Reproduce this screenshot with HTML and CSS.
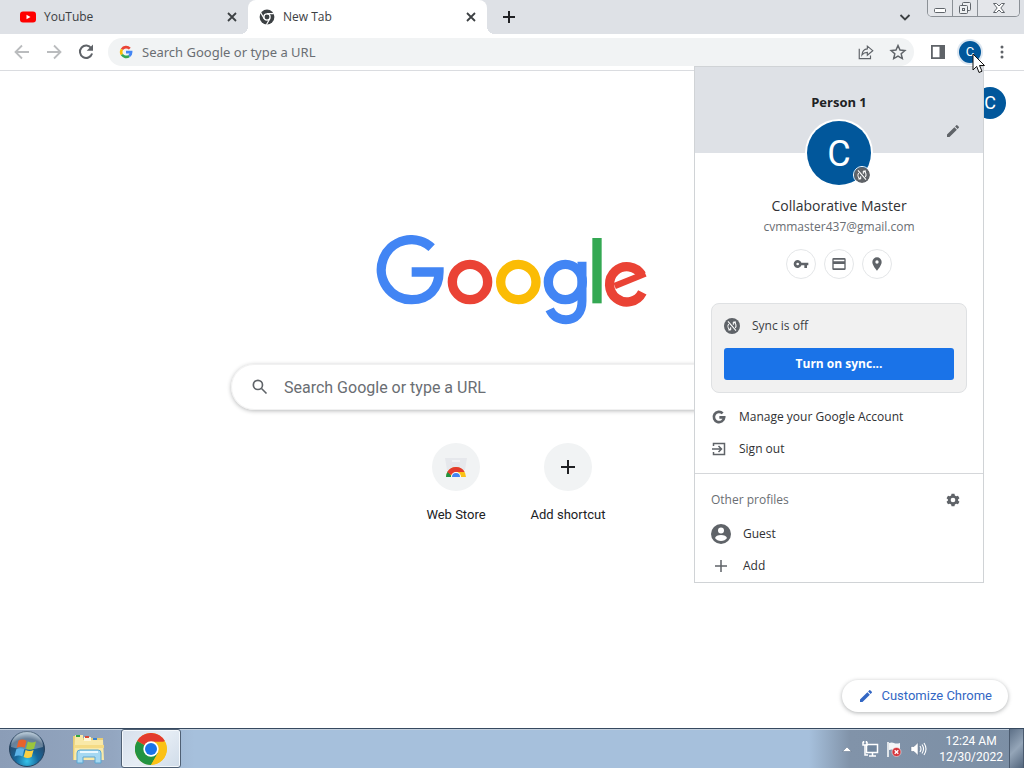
FILE: index.html
```html
<!DOCTYPE html>
<html lang="en">
<head>
<meta charset="utf-8">
<title>New Tab</title>
<link rel="stylesheet" href="styles.css">
</head>
<body>
<svg class="defs" aria-hidden="true">
  <symbol id="close" viewBox="0 0 16 16"><path d="M4 4l8 8M12 4l-8 8" fill="none" stroke="currentColor" stroke-width="1.8"/></symbol>
  <symbol id="plus" viewBox="0 0 16 16"><path d="M8 2v12M2 8h12" fill="none" stroke="currentColor" stroke-width="2"/></symbol>
  <symbol id="pencil" viewBox="0 0 24 24"><path fill="currentColor" d="M3 17.25V21h3.75L17.81 9.94l-3.75-3.75L3 17.25zM20.71 7.04a1 1 0 0 0 0-1.41l-2.34-2.34a1 1 0 0 0-1.41 0l-1.83 1.83 3.75 3.75 1.83-1.83z"/></symbol>
  <symbol id="syncoff" viewBox="0 0 24 24"><circle cx="12" cy="12" r="12" fill="#5f6368"/><g fill="none" stroke="#fff" stroke-width="1.6"><path d="M6 5l12 14"/><path d="M10 18H6.500M9 18c-3-2-4-6-2-9M14 6h4M15 6c3 2 4 6 2 9"/><path d="M10 14v4M14 10V6"/></g></symbol>
  <symbol id="chrome" viewBox="0 0 48 48">
    <circle cx="24" cy="24" r="24" fill="#fbc116"/>
    <path d="M24 24L3.200 12A24 24 0 0 1 44.800 12Z" fill="#e33b2e"/>
    <path d="M3.200 12A24 24 0 0 0 24 48L34.400 30 24 24Z" fill="#229342"/>
    <path d="M24 13h20.800A24 24 0 0 1 24 48l10.400-18Z" fill="#fbc116"/>
    <circle cx="24" cy="24" r="11.500" fill="#fff"/><circle cx="24" cy="24" r="9" fill="#1a73e8"/>
  </symbol>
</svg>

<header class="browser">
  <div class="tabstrip">
    <div class="tab">
      <svg class="i16" viewBox="0 0 16 16"><rect y="2.500" width="16" height="11" rx="3" fill="#f00"/><path d="M6.500 5.700v4.600l4-2.300z" fill="#fff"/></svg>
      <span class="tab-title">YouTube</span>
      <button class="plain" aria-label="Close YouTube"><svg class="i16"><use href="#close"/></svg></button>
    </div>
    <div class="tab active">
      <svg class="i16" viewBox="0 0 16 16"><circle cx="8" cy="8" r="7.400" fill="#3c4043"/><circle cx="8" cy="8" r="3.100" fill="#3c4043" stroke="#fff" stroke-width="1.300"/><path d="M8 4.700h6.800M5.200 9.700L1.800 3.800M10.800 9.700l-3.400 6" stroke="#fff" stroke-width="1.200"/></svg>
      <span class="tab-title">New Tab</span>
      <button class="plain" aria-label="Close New Tab"><svg class="i16"><use href="#close"/></svg></button>
    </div>
    <button class="plain newtab" aria-label="Open new tab"><svg class="i16"><use href="#plus"/></svg></button>
    <button class="plain tabsearch" aria-label="Search tabs"><svg class="i16" viewBox="0 0 16 16"><path d="M3.500 6L8 10.500 12.500 6" fill="none" stroke="currentColor" stroke-width="1.800"/></svg></button>
    <div class="wincontrols">
      <button aria-label="Minimize"><svg viewBox="0 0 16 16"><rect x="2.500" y="8.500" width="11" height="4" rx="1" fill="#fff" stroke="#60656b"/></svg></button>
      <button aria-label="Restore"><svg viewBox="0 0 16 16"><g fill="#eef0f2" stroke="#60656b"><rect x="5.500" y="2.500" width="8" height="8" rx="1"/><rect x="2.500" y="5.500" width="8" height="8" rx="1"/><rect x="5.500" y="8.500" width="2" height="2"/></g></svg></button>
      <button class="wide" aria-label="Close"><svg viewBox="0 0 16 16"><path d="M2.500 3.500h3L8 6l2.500-2.500h3L9.800 8l3.700 4.500h-3L8 10l-2.500 2.500h-3L6.200 8z" fill="#fff" stroke="#60656b"/></svg></button>
    </div>
  </div>
  <div class="toolbar">
    <button class="plain tool dim" aria-label="Back"><svg class="i20" viewBox="0 0 20 20"><path d="M17 10H4M10 3.500L3.500 10l6.500 6.500" fill="none" stroke="currentColor" stroke-width="1.800"/></svg></button>
    <button class="plain tool dim" aria-label="Forward"><svg class="i20" viewBox="0 0 20 20"><path d="M3 10h13M10 3.500l6.500 6.500-6.500 6.500" fill="none" stroke="currentColor" stroke-width="1.800"/></svg></button>
    <button class="plain tool" aria-label="Reload"><svg class="i20" viewBox="0 0 20 20"><path d="M15.300 6.200A6.200 6.200 0 1 0 16.100 11.500" fill="none" stroke="currentColor" stroke-width="2"/><path d="M17 2.500v6.300h-6.300z" fill="currentColor"/></svg></button>
    <div class="omnibox">
      <svg class="glogo" viewBox="0 0 48 48" aria-hidden="true"><g fill="none" stroke-width="9"><path d="M10 15A17.500 17.500 0 0 1 37 12.500" stroke="#ea4335"/><path d="M10 33A17.500 17.500 0 0 1 10 15" stroke="#fbbc05"/><path d="M10 33A17.500 17.500 0 0 0 35 37.500" stroke="#34a853"/><path d="M35 37.500Q41.500 32 41.500 24.500H24" stroke="#4285f4"/></g></svg>
      <input type="text" aria-label="Address and search bar" placeholder="Search Google or type a URL">
      <button class="plain tool" aria-label="Share"><svg class="i18" viewBox="0 0 20 20"><g fill="none" stroke="currentColor" stroke-width="1.300"><path d="M2.500 6.500v10.800H15v-3.500"/><path d="M11.500 3.500l6 5-6 5v-3c-3 0-4.500.8-6 2.800.3-4 2.500-6.500 6-6.800z"/></g></svg></button>
      <button class="plain tool" aria-label="Bookmark this tab"><svg class="i20" viewBox="0 0 20 20"><path d="M10 3.500l2 4.500 4.900.500-3.700 3.300 1.100 4.800L10 14.100l-4.300 2.500 1.100-4.800L3.100 8.500 8 8z" fill="none" stroke="currentColor" stroke-width="1.500"/></svg></button>
    </div>
    <button class="plain tool" aria-label="Side panel"><svg class="i20" viewBox="0 0 20 20"><path d="M3 3h14v14H3zM4.800 4.800v10.400h6.700V4.800z" fill="currentColor" fill-rule="evenodd"/></svg></button>
    <button class="plain tool" aria-label="Profile"><span class="avatar tiny">C</span></button>
    <button class="plain tool" aria-label="Menu"><svg class="i20" viewBox="0 0 20 20"><g fill="currentColor"><circle cx="10" cy="5" r="1.500"/><circle cx="10" cy="10" r="1.500"/><circle cx="10" cy="15" r="1.500"/></g></svg></button>
  </div>
</header>

<main class="page">
  <button class="plain account" aria-label="Google Account"><span class="avatar small">C</span></button>
  <svg class="wordmark" viewBox="48 30 812 270" role="img" aria-label="Google">
    <g fill="none" stroke-width="28">
      <path d="M213 68A90 90 0 1 0 154 224C204 224 235 190 235 141H153" stroke="#4285f4"/>
      <circle cx="328" cy="171" r="53" stroke="#ea4335"/>
      <circle cx="473" cy="171" r="53" stroke="#fbbc05"/>
      <ellipse cx="614" cy="171" rx="51" ry="53" stroke="#4285f4"/>
      <path d="M664 110V228C664 264 645 284 616 284C593 284 576 272 567 253" stroke="#4285f4" stroke-width="27"/>
      <path d="M709 39V235" stroke="#34a853"/>
      <path d="M843 150A52 53 0 1 0 845 202" stroke="#ea4335"/>
      <path d="M762 183L854 146" stroke="#ea4335" stroke-width="19"/>
    </g>
  </svg>
  <div class="searchbox">
    <svg class="i20" viewBox="0 0 24 24"><g fill="none" stroke="currentColor" stroke-width="2"><circle cx="9.500" cy="9.500" r="5.500"/><path d="M13.800 13.800l6 6"/></g></svg>
    <input type="text" aria-label="Search" placeholder="Search Google or type a URL">
  </div>
  <nav class="shortcuts">
    <a href="#" class="shortcut"><span class="disc"><svg class="i24" viewBox="0 0 24 24"><path d="M1 3h22l-2 12H3z" fill="#e6e8ec"/><path d="M8 6h8" stroke="#f1f3f4" stroke-width="2"/><path d="M2 22a10 10 0 0 1 20 0z" fill="#fbc116"/><path d="M2 22a10 10 0 0 1 2-6l4 6z" fill="#229342"/><path d="M3.300 17A10 10 0 0 1 20.700 17H12l-5 3z" fill="#e33b2e"/><path d="M7 22a5 5 0 0 1 10 0z" fill="#fff"/><path d="M8 22a4 4 0 0 1 8 0z" fill="#4285f4"/></svg></span>Web Store</a>
    <a href="#" class="shortcut"><span class="disc"><svg class="i20" viewBox="0 0 20 20"><path d="M10 3v14M3 10h14" stroke="#202124" stroke-width="2"/></svg></span>Add shortcut</a>
  </nav>
  <button class="customize"><svg class="i16"><use href="#pencil"/></svg>Customize Chrome</button>
</main>

<footer class="taskbar">
  <button class="plain start" aria-label="Start"><svg viewBox="0 0 38 38">
    <defs><radialGradient id="orb" cx=".5" cy=".85" r=".8"><stop offset="0" stop-color="#35c3ea"/><stop offset=".4" stop-color="#17689c"/><stop offset=".8" stop-color="#28496b"/><stop offset="1" stop-color="#8fa9bf"/></radialGradient></defs>
    <circle cx="19" cy="19" r="17.500" fill="url(#orb)" stroke="#26425e"/><path d="M3 17A16 16 0 0 1 35 17Q19 22 3 17z" fill="#fff" opacity=".3"/>
    <path d="M10.500 10.500q4-2 8 .3l-1.800 7q-4-2-8 0z" fill="#e8622c"/><path d="M19.800 11.500q4 2 8.200 0l-2 7.200q-4 2-8 0z" fill="#9bc53c"/><path d="M8.300 19.200q4-2 8 0l-1.900 7.200q-4-2-8 .2z" fill="#5cb3e8"/><path d="M17.600 20q4 2 8 0l-2 7q-4 2-8 0z" fill="#fbd043"/></svg></button>
  <button class="plain explorer" aria-label="Windows Explorer"><svg viewBox="0 0 36 32"><path d="M2 3h8l2 2h20v22H2z" fill="#e9cd74"/><path d="M4 2h8v5h20l1 20H3z" fill="#f9e9a8"/><path d="M13 4h7v4h-7z" fill="#fff7d8"/><path d="M5 2h4v2H5z" fill="#31a643"/><path d="M14 3h4v2h-4z" fill="#d94b39"/><path d="M22 5h4v2h-4z" fill="#3c83cf"/><path d="M3 12h30v3H3z" fill="#f4db85"/><path d="M6 30V20q0-3 3-3h18q3 0 3 3v10h-6v-6H12v6z" fill="#a5d8f2" stroke="#5aa7d2"/><path d="M9 19h18" stroke="#e9f8ff" stroke-width="2"/></svg></button>
  <button class="plain running" aria-label="Google Chrome"><svg class="i32"><use href="#chrome"/></svg></button>
  <div class="tray">
    <svg class="i16" viewBox="0 0 16 16"><path d="M3.500 10.500h9L8 6z" fill="#fff" stroke="#5c6f86" stroke-width=".5"/></svg>
    <svg class="i18" viewBox="0 0 18 18"><rect x="5.500" y="4.500" width="11" height="8" fill="#70859d" stroke="#fff" stroke-width="1.500"/><path d="M8 16h7M11.500 13v3M2 2v3h4V2M4 5v10h3M2.500 1v2M5.500 1v2" fill="none" stroke="#fff" stroke-width="1.500"/></svg>
    <svg class="i18" viewBox="0 0 18 18"><path d="M3 2v15" stroke="#fff" stroke-width="1.500"/><path d="M4 3q3-1 5 0t6 0v7q-4 1-6 0t-5 0z" fill="#f4f6f8"/><circle cx="11.500" cy="12" r="4.500" fill="#d5343a" stroke="#fff" stroke-width=".5"/><path d="M9.700 10.200l3.600 3.600M13.300 10.200l-3.600 3.600" stroke="#fff" stroke-width="1.400"/></svg>
    <svg class="i18" viewBox="0 0 18 18"><path d="M2 6.500h3l4-4v13l-4-4H2z" fill="#fff" stroke="#5c6f86" stroke-width=".5"/><path d="M11 6q2 3 0 6M13 4.500q3 4.500 0 9M15 3q4 6 0 12" fill="none" stroke="#fff" stroke-width="1.100"/></svg>
    <div class="clock"><span>12:24 AM</span><span>12/30/2022</span></div>
    <button class="showdesktop" aria-label="Show desktop"></button>
  </div>
</footer>

<section class="profile" aria-label="Profile menu">
  <div class="cover">
    <h2>Person 1</h2>
    <button class="plain edit" aria-label="Edit profile"><svg class="i16"><use href="#pencil"/></svg></button>
    <div class="portrait"><span class="avatar large">C</span><svg class="badge"><use href="#syncoff"/></svg></div>
  </div>
  <div class="identity">
    <div class="name">Collaborative Master</div>
    <div class="mail">cvmmaster437@gmail.com</div>
    <div class="quick">
      <button aria-label="Passwords"><svg class="i16" viewBox="0 0 24 24"><path fill="currentColor" d="M12.650 10A6 6 0 1 0 12.650 14H17v4h4v-4h2v-4zM7 14a2 2 0 1 1 0-4 2 2 0 0 1 0 4z"/></svg></button>
      <button aria-label="Payment methods"><svg class="i16" viewBox="0 0 24 24"><path fill="currentColor" fill-rule="evenodd" d="M4 3h16a2 2 0 0 1 2 2v14a2 2 0 0 1-2 2H4a2 2 0 0 1-2-2V5a2 2 0 0 1 2-2zM4 5.500v2.500h16V5.500zM4 12v6.500h16V12z"/></svg></button>
      <button aria-label="Addresses"><svg class="i16" viewBox="0 0 24 24"><path fill="currentColor" fill-rule="evenodd" d="M12 2a7 7 0 0 0-7 7c0 5.300 7 13 7 13s7-7.700 7-13a7 7 0 0 0-7-7zm0 4.500a2.500 2.500 0 1 1 0 5 2.500 2.500 0 0 1 0-5z"/></svg></button>
    </div>
  </div>
  <div class="sync">
    <div class="syncstate"><svg class="i16"><use href="#syncoff"/></svg>Sync is off</div>
    <button class="primary">Turn on sync...</button>
  </div>
  <div class="actions">
    <button class="plain row"><svg class="i16" viewBox="0 0 48 48"><path d="M35 13A15.500 15.500 0 1 0 39.500 25H25" fill="none" stroke="currentColor" stroke-width="8"/></svg>Manage your Google Account</button>
    <button class="plain row"><svg class="i16" viewBox="0 0 16 16"><path d="M2.500 5V2.500h11v11h-11V11M1 8h9M7.500 5l3 3-3 3" fill="none" stroke="currentColor" stroke-width="1.500"/></svg>Sign out</button>
  </div>
  <div class="others">
    <div class="othershead"><span>Other profiles</span><button class="plain" aria-label="Manage profiles"><svg class="i16" viewBox="0 0 24 24"><path fill="currentColor" fill-rule="evenodd" d="M9.800 2.500h4.400l.6 2.900 1.900 1.100 2.800-1 2.200 3.800-2.200 2v1.400l2.200 2-2.200 3.800-2.800-1-1.900 1.100-.6 2.900H9.800l-.6-2.900-1.900-1.100-2.800 1-2.200-3.800 2.200-2v-1.400l-2.200-2 2.200-3.800 2.800 1 1.900-1.100zM12 8.500a3.500 3.500 0 1 0 0 7 3.500 3.500 0 0 0 0-7z"/></svg></button></div>
    <button class="plain row"><svg class="i20" viewBox="0 0 20 20"><circle cx="10" cy="10" r="10" fill="#5f6368"/><circle cx="10" cy="6.500" r="3" fill="#fff"/><path d="M4 14q1-3 6-3t6 3q-2 3-6 3t-6-3z" fill="#fff"/></svg>Guest</button>
    <button class="plain row"><svg class="i20" viewBox="0 0 20 20"><path d="M10 4v12M4 10h12" stroke="#5f6368" stroke-width="1.500"/></svg>Add</button>
  </div>
</section>

<svg class="cursor" viewBox="0 0 14 21" aria-hidden="true"><path d="M1 1v16l3.700-3.600L7 19.500l3-1.300-2.500-5.700h5z" fill="#fff" stroke="#111"/></svg>
</body>
</html>
```

FILE: styles.css
```css
* { box-sizing: border-box; }
body {
  margin: 0;
  min-height: 100vh;
  display: flex;
  flex-direction: column;
  position: relative;
  background: #fff;
  color: #202124;
  font: 12px/16px "Open Sans", "Noto Sans", sans-serif;
}
.defs { position: absolute; width: 0; height: 0; }
svg { display: block; flex: none; }
button, input { font: inherit; color: inherit; }
button { padding: 0; cursor: pointer; }
.plain { background: none; border: 0; display: flex; align-items: center; justify-content: center; }
.i16 { width: 16px; height: 16px; }
.i18 { width: 18px; height: 18px; }
.i20 { width: 20px; height: 20px; }
.i24 { width: 24px; height: 24px; }
.i32 { width: 32px; height: 32px; }

.tabstrip { display: flex; height: 34px; background: #dee1e6; color: #3c4043; }
.tab { display: flex; align-items: center; gap: 8px; width: 248px; padding: 0 8px 0 20px; }
.tab.active { position: relative; width: 239px; padding: 0 8px 0 11px; background: #fff; border-radius: 8px 8px 0 0; }
.tab.active::before, .tab.active::after { content: ""; position: absolute; bottom: 0; width: 8px; height: 8px; }
.tab.active::before { right: 100%; background: radial-gradient(circle at 0 0, transparent 8px, #fff 8px); }
.tab.active::after { left: 100%; background: radial-gradient(circle at 100% 0, transparent 8px, #fff 8px); }
.tab-title { flex: 1; }
.newtab { width: 44px; }
.newtab svg { color: #202124; }
.tabsearch { margin-left: auto; width: 44px; }
.wincontrols { display: flex; height: 17px; margin-right: 4px; border: 1px solid #8b9096; border-top: 0; border-radius: 0 0 5px 5px; overflow: hidden; }
.wincontrols button { display: flex; align-items: center; justify-content: center; width: 25px; border: 0; border-right: 1px solid #8b9096; background: #e4e6ea; }
.wincontrols .wide { width: 41px; border-right: 0; }
.wincontrols svg { width: 16px; height: 16px; }

.toolbar { display: flex; align-items: center; height: 37px; padding: 0 6px; border-bottom: 1px solid #dadce0; }
.tool { width: 32px; height: 28px; color: #5f6368; }
.dim { color: #babcbe; }
.omnibox { flex: 1; display: flex; align-items: center; height: 28px; margin: 0 8px 0 6px; padding-left: 11px; background: #f1f3f4; border-radius: 14px; }
.glogo { width: 14px; height: 14px; }
.omnibox input, .searchbox input { flex: 1; min-width: 0; border: 0; background: none; outline: 0; }
.omnibox input { padding: 0 0 0 9px; font-family: "Noto Sans", sans-serif; font-size: 13px; }
input::placeholder { color: #6a6e73; opacity: 1; }

.avatar { display: flex; align-items: center; justify-content: center; border-radius: 50%; background: #01579b; color: #fff; font-family: Roboto, sans-serif; }
.tiny { width: 22px; height: 22px; font-size: 13px; box-shadow: 0 0 0 2px #dce6f0; }
.small { width: 32px; height: 32px; font-size: 18px; }
.large { width: 64px; height: 64px; padding-top: 2px; font-size: 36px; box-shadow: 0 0 0 2px #fff; }

.page { flex: 1; position: relative; display: flex; flex-direction: column; align-items: center; font-family: Roboto, sans-serif; }
.account { align-self: flex-end; margin: 16px 18px 0 0; }
.wordmark { width: 272px; height: 90px; margin-top: 116px; }
.searchbox { display: flex; align-items: center; width: 562px; max-width: 90%; height: 46px; margin-top: 39px; padding: 0 18px; border-radius: 23px; border: 1px solid #f1f1f1; box-shadow: 0 1px 4px rgba(32, 33, 36, .32); color: #5f6368; }
.searchbox input { padding: 0 0 0 14px; font-size: 16px; }
.shortcuts { display: flex; margin-top: 33px; }
.shortcut { display: flex; flex-direction: column; align-items: center; gap: 16px; width: 112px; color: #202124; font-size: 13px; text-decoration: none; }
.disc { display: flex; align-items: center; justify-content: center; width: 48px; height: 48px; border-radius: 50%; background: #f1f3f4; }
.customize { position: absolute; right: 16px; bottom: 16px; display: flex; align-items: center; gap: 7px; height: 32px; padding: 0 16px; border: 0; border-radius: 16px; background: #fff; box-shadow: 0 1px 4px rgba(60, 64, 67, .4); color: #3367c4; font-size: 13px; }

.taskbar { display: flex; height: 40px; border-top: 1px solid #36495f; box-shadow: inset 0 1px #c3d0de; background: linear-gradient(90deg, #8b9db7 0, #93a6c0 11%, #a6c0dc 19%, #a6c0dc 79%, #8193a9 83%, #7c8fa5 100%); }
.start { width: 54px; }
.start svg { width: 38px; height: 38px; }
.explorer { width: 70px; }
.explorer svg { width: 36px; height: 32px; }
.running { width: 60px; margin-left: -3px; border: 1px solid #4f6074; border-radius: 3px; background: linear-gradient(135deg, #d6dfeb, #e6edf5 50%, #d0dce9); box-shadow: inset 0 0 0 1px #f4f8fc; }
.tray { display: flex; align-items: center; gap: 6px; margin-left: auto; }
.clock { display: flex; flex-direction: column; align-items: center; margin-left: 6px; color: #fff; font-family: Roboto, sans-serif; }
.showdesktop { align-self: stretch; width: 15px; border: 1px solid #4a5a6e; border-width: 0 1px; background: linear-gradient(135deg, #5d7087, #94a5b8 50%, #52657c); }

.profile { position: absolute; top: 66px; right: 40px; width: 290px; background: #fff; border: 1px solid #d0d3d6; color: #3c4043; }
.cover { position: relative; height: 86px; background: #dee1e6; text-align: center; }
.cover h2 { margin: 0; padding-top: 27px; font-size: 13px; line-height: 16px; font-weight: 700; color: #202124; }
.edit { position: absolute; right: 22px; top: 56px; color: #5f6368; }
.portrait { position: absolute; top: 54px; left: 112px; }
.badge { position: absolute; right: 0; bottom: 1px; width: 18px; height: 18px; border: 1px solid #fff; border-radius: 50%; }
.identity { padding: 42px 16px 0; text-align: center; }
.name { font-size: 14px; line-height: 22px; color: #303134; }
.mail { margin-top: 2px; line-height: 16px; color: #6a6e73; }
.quick { display: flex; justify-content: center; gap: 8px; margin-top: 14px; }
.quick button { display: flex; align-items: center; justify-content: center; width: 30px; height: 30px; border: 1px solid #e4e6e8; border-radius: 50%; background: #fff; color: #5f6368; }
.sync { margin: 24px 16px 0; padding: 12px; background: #f1f1f1; border: 1px solid #dfe1e3; border-radius: 8px; }
.syncstate { display: flex; align-items: center; gap: 12px; height: 20px; }
.primary { display: block; width: 100%; height: 32px; margin-top: 12px; border: 0; border-radius: 3px; background: #1a73e8; color: #fff; font-weight: 700; }
.actions { padding: 8px 0; border-bottom: 1px solid #d5d7da; }
.row { justify-content: flex-start; gap: 12px; width: 100%; height: 32px; padding: 0 16px; color: #303134; }
.row svg { color: #5f6368; }
.othershead { display: flex; justify-content: space-between; align-items: center; height: 44px; padding: 8px 22px 0 16px; color: #6a6e73; }
.othershead button { color: #5f6368; }
.cursor { position: absolute; top: 53px; right: 38px; width: 14px; height: 21px; }
```
